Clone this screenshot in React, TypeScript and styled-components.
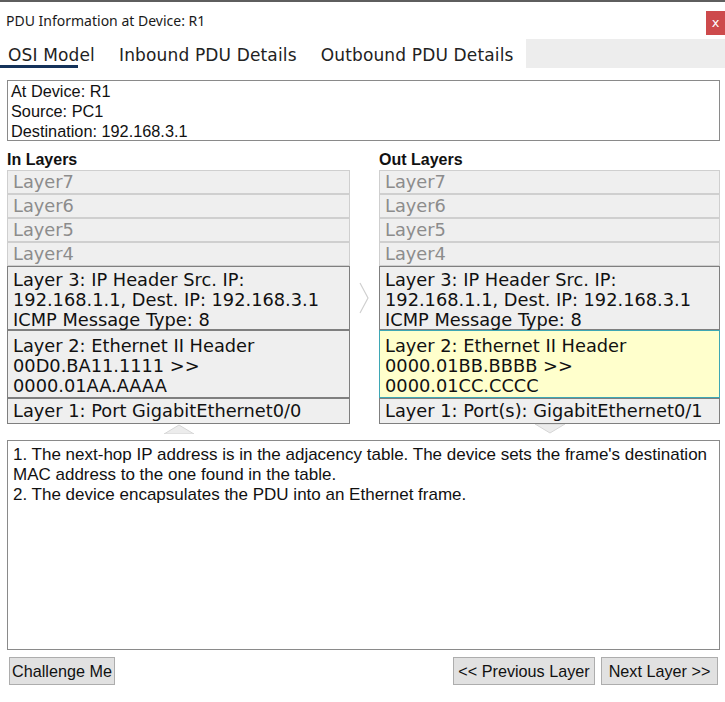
import React from "react";
import styled, { createGlobalStyle } from "styled-components";

const Global = createGlobalStyle`
  html, body { margin: 0; padding: 0; background: #ffffff; }
  body { width: 725px; height: 702px; overflow: hidden; }
`;

const Window = styled.div`
  width: 725px;
  height: 702px;
  box-sizing: border-box;
  border-top: 2px solid #5e5e5e;
  background: #fff;
  display: flex;
  flex-direction: column;
  font-family: "Liberation Sans", Arial, sans-serif;
  color: #111;
`;

const TitleBar = styled.div`
  height: 37px;
  display: flex;
  align-items: center;
  justify-content: space-between;
  padding-left: 6px;
`;

const Title = styled.div`
  font-family: "Noto Sans", "Liberation Sans", sans-serif;
  font-size: 14px;
  color: #1a1a1a;
`;

const Close = styled.div`
  width: 19px;
  height: 24px;
  background: #cd4a4c;
  color: #fff;
  font-family: "DejaVu Sans", sans-serif;
  font-size: 13px;
  display: flex;
  align-items: center;
  justify-content: center;
  margin-top: 4px;
`;

const TabRow = styled.div`
  height: 29px;
  display: flex;
`;

const Tab = styled.div<{ $active?: boolean; $first?: boolean }>`
  position: relative;
  padding: 3px 12px 0 ${(p) => (p.$first ? "8px" : "12px")};
  font-family: "DejaVu Sans", Verdana, sans-serif;
  font-size: 17px;
  letter-spacing: 0.15px;
  display: flex;
  align-items: center;
  color: #222;
  &::after {
    content: "";
    display: ${(p) => (p.$active ? "block" : "none")};
    position: absolute;
    left: 0;
    bottom: 0;
    width: 78px;
    height: 3px;
    background: #14325a;
  }
`;

const TabFill = styled.div`
  flex: 1;
  background: #ededed;
`;

const Content = styled.div`
  padding: 12px 5px 0 7px;
  display: flex;
  flex-direction: column;
`;

const InfoBox = styled.div`
  border: 1px solid #8a8a8a;
  padding: 0 3px;
  height: 61px;
  box-sizing: border-box;
  font-size: 16.3px;
  line-height: 20px;
`;

const Columns = styled.div`
  display: grid;
  grid-template-columns: 343px 29px 1fr;
  margin-top: 9px;
`;

const Column = styled.div`
  display: flex;
  flex-direction: column;
`;

const ColumnTitle = styled.div`
  font-weight: bold;
  font-size: 16px;
  line-height: 20px;
  height: 20px;
`;

const Layer = styled.div<{ $state: "off" | "on" | "hl" }>`
  box-sizing: border-box;
  font-family: "DejaVu Sans", Verdana, sans-serif;
  font-size: 17.8px;
  line-height: 20px;
  padding: 1px 5px 1px;
  white-space: nowrap;
  background: ${(p) => (p.$state === "hl" ? "#ffffcc" : "#efefef")};
  color: ${(p) => (p.$state === "off" ? "#8c8c8c" : "#111")};
  border: 1px solid
    ${(p) => (p.$state === "off" ? "#cfcfcf" : p.$state === "hl" ? "#3ea7b4" : "#7f7f7f")};
`;

const Multi = styled(Layer)`
  padding-top: 3px;
  height: 64px;
`;

const Multi2 = styled(Layer)`
  padding-top: 5px;
  height: 68px;
`;

const Single = styled(Layer)`
  height: 26px;
  padding-top: 2px;
`;

const Gap = styled.div`
  display: flex;
  justify-content: center;
  padding-top: 132px;
  padding-right: 1px;
`;

const ChevronRow = styled.div`
  height: 16px;
  display: flex;
  justify-content: center;
`;

const Desc = styled.div`
  border: 1px solid #8a8a8a;
  height: 210px;
  box-sizing: border-box;
  padding: 4px 5px;
  font-size: 17px;
  line-height: 20px;
`;

const ButtonBar = styled.div`
  display: flex;
  justify-content: space-between;
  padding: 7px 2px 0 2px;
`;

const ButtonGroup = styled.div`
  display: flex;
  gap: 6px;
`;

const Button = styled.button<{ $w: number }>`
  width: ${(p) => p.$w}px;
  height: 28px;
  box-sizing: border-box;
  padding: 0;
  background: #e1e1e1;
  border: 1px solid #adadad;
  font-family: "Liberation Sans", Arial, sans-serif;
  font-size: 16.2px;
  color: #111;
`;

const ArrowRight = () => (
  <svg width="10" height="32" viewBox="0 0 10 32">
    <polyline points="1,1 9,16 1,31" fill="none" stroke="#d0d0d0" strokeWidth="1.2" />
  </svg>
);

const ChevronUp = () => (
  <svg width="30" height="10" viewBox="0 0 30 10">
    <polygon points="0,10 15,1 30,10" fill="#ececec" stroke="#d6d6d6" strokeWidth="1" />
  </svg>
);

const ChevronDown = () => (
  <svg width="30" height="10" viewBox="0 0 30 10">
    <polygon points="0,0 15,9 30,0" fill="#ececec" stroke="#d6d6d6" strokeWidth="1" />
  </svg>
);

type Side = {
  title: string;
  l3: string[];
  l2: string[];
  l1: string;
  hl: boolean;
  down: boolean;
};

const sides: Side[] = [
  {
    title: "In Layers",
    l3: ["Layer 3: IP Header Src. IP:", "192.168.1.1, Dest. IP: 192.168.3.1", "ICMP Message Type: 8"],
    l2: ["Layer 2: Ethernet II Header", "00D0.BA11.1111 >>", "0000.01AA.AAAA"],
    l1: "Layer 1: Port GigabitEthernet0/0",
    hl: false,
    down: false,
  },
  {
    title: "Out Layers",
    l3: ["Layer 3: IP Header Src. IP:", "192.168.1.1, Dest. IP: 192.168.3.1", "ICMP Message Type: 8"],
    l2: ["Layer 2: Ethernet II Header", "0000.01BB.BBBB >>", "0000.01CC.CCCC"],
    l1: "Layer 1: Port(s): GigabitEthernet0/1",
    hl: true,
    down: true,
  },
];

const LayerColumn = ({ s }: { s: Side }) => (
  <Column>
    <ColumnTitle>{s.title}</ColumnTitle>
    {["Layer7", "Layer6", "Layer5", "Layer4"].map((l) => (
      <Layer key={l} $state="off">
        {l}
      </Layer>
    ))}
    <Multi $state="on">
      {s.l3.map((t) => (
        <div key={t}>{t}</div>
      ))}
    </Multi>
    <Multi2 $state={s.hl ? "hl" : "on"}>
      {s.l2.map((t) => (
        <div key={t}>{t}</div>
      ))}
    </Multi2>
    <Single $state="on">{s.l1}</Single>
    <ChevronRow>{s.down ? <ChevronDown /> : <ChevronUp />}</ChevronRow>
  </Column>
);

export default function App() {
  return (
    <Window>
      <Global />
      <TitleBar>
        <Title>PDU Information at Device: R1</Title>
        <Close>x</Close>
      </TitleBar>
      <TabRow>
        <Tab $active $first>
          OSI Model
        </Tab>
        <Tab>Inbound PDU Details</Tab>
        <Tab>Outbound PDU Details</Tab>
        <TabFill />
      </TabRow>
      <Content>
        <InfoBox>
          <div>At Device: R1</div>
          <div>Source: PC1</div>
          <div>Destination: 192.168.3.1</div>
        </InfoBox>
        <Columns>
          <LayerColumn s={sides[0]} />
          <Gap>
            <ArrowRight />
          </Gap>
          <LayerColumn s={sides[1]} />
        </Columns>
        <Desc>
          <div>
            1. The next-hop IP address is in the adjacency table. The device sets the frame's destination
            MAC address to the one found in the table.
          </div>
          <div>2. The device encapsulates the PDU into an Ethernet frame.</div>
        </Desc>
        <ButtonBar>
          <Button $w={106}>Challenge Me</Button>
          <ButtonGroup>
            <Button $w={142}>&lt;&lt; Previous Layer</Button>
            <Button $w={117}>Next Layer &gt;&gt;</Button>
          </ButtonGroup>
        </ButtonBar>
      </Content>
    </Window>
  );
}
